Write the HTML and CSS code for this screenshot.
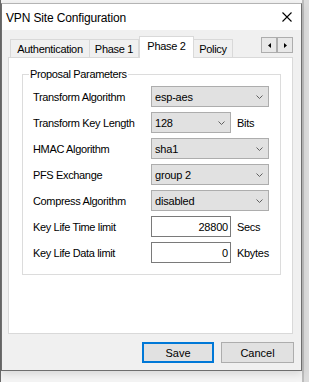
FILE: index.html
```html
<!DOCTYPE html>
<html>
<head>
<meta charset="utf-8">
<link rel="stylesheet" href="styles.css">
</head>
<body>
<div class="window">
  <div class="titlebar">
    <span class="title">VPN Site Configuration</span>
    <svg class="close" width="10" height="10" viewBox="0 0 10 10"><path d="M0.5 0.5L9.5 9.5M9.5 0.5L0.5 9.5" stroke="#000" stroke-width="1.1" fill="none"/></svg>
  </div>
  <div class="client">
    <div class="tabstrip">
      <div class="tab tab-auth">Authentication</div>
      <div class="tab tab-p1">Phase 1</div>
      <div class="tab tab-p2 active">Phase 2</div>
      <div class="tab tab-pol">Policy</div>
      <div class="scroller">
        <span class="sbtn"><svg width="3" height="5" viewBox="0 0 3 5"><path d="M3 0L0 2.5L3 5Z" fill="#000"/></svg></span>
        <span class="sbtn"><svg width="3" height="5" viewBox="0 0 3 5"><path d="M0 0L3 2.5L0 5Z" fill="#000"/></svg></span>
      </div>
    </div>
    <div class="panel">
      <fieldset class="group">
        <legend>Proposal Parameters</legend>
        <div class="grid">
          <div class="label">Transform Algorithm</div>
          <div class="ctl"><div class="select wide"><span>esp-aes</span><svg class="chev" width="7" height="4" viewBox="0 0 7 4"><path d="M0.5 0.5L3.5 3.5L6.5 0.5" stroke="#606060" fill="none"/></svg></div></div>

          <div class="label">Transform Key Length</div>
          <div class="ctl"><div class="select short"><span>128</span><svg class="chev" width="7" height="4" viewBox="0 0 7 4"><path d="M0.5 0.5L3.5 3.5L6.5 0.5" stroke="#606060" fill="none"/></svg></div><span class="unit">Bits</span></div>

          <div class="label">HMAC Algorithm</div>
          <div class="ctl"><div class="select wide"><span>sha1</span><svg class="chev" width="7" height="4" viewBox="0 0 7 4"><path d="M0.5 0.5L3.5 3.5L6.5 0.5" stroke="#606060" fill="none"/></svg></div></div>

          <div class="label">PFS Exchange</div>
          <div class="ctl"><div class="select wide"><span>group 2</span><svg class="chev" width="7" height="4" viewBox="0 0 7 4"><path d="M0.5 0.5L3.5 3.5L6.5 0.5" stroke="#606060" fill="none"/></svg></div></div>

          <div class="label">Compress Algorithm</div>
          <div class="ctl"><div class="select wide"><span>disabled</span><svg class="chev" width="7" height="4" viewBox="0 0 7 4"><path d="M0.5 0.5L3.5 3.5L6.5 0.5" stroke="#606060" fill="none"/></svg></div></div>

          <div class="label">Key Life Time limit</div>
          <div class="ctl"><div class="input">28800</div><span class="unit">Secs</span></div>

          <div class="label">Key Life Data limit</div>
          <div class="ctl"><div class="input">0</div><span class="unit">Kbytes</span></div>
        </div>
      </fieldset>
    </div>
    <div class="buttons">
      <div class="btn btn-default">Save</div>
      <div class="btn btn-cancel">Cancel</div>
    </div>
  </div>
</div>
</body>
</html>
```

FILE: styles.css
```css
html, body {
  margin: 0;
  padding: 0;
}
body {
  width: 309px;
  height: 382px;
  overflow: hidden;
  font-family: "Liberation Sans", Arial, sans-serif;
  font-size: 11px;
  color: #000;
  background:
    linear-gradient(90deg, #6a6a6a 0 1px, transparent 1px 302px, #bdbdbd 302px 304px, #dcdcdc 304px 309px),
    #f4f4f4;
}
.window {
  margin: 3px 0 0 1px;
  width: 301px;
  height: 368px;
  box-sizing: border-box;
  border: 1px solid #6e6e6e;
  border-top-color: #b4b4b4;
  background: #f0f0f0;
  display: flex;
  flex-direction: column;
  box-shadow: 0 3px 8px rgba(0, 0, 0, 0.12);
}
.titlebar {
  height: 26px;
  background: #fff;
  display: flex;
  align-items: center;
  padding: 0 9px 0 4px;
  flex: none;
}
.title {
  font-size: 12px;
  letter-spacing: -0.15px;
  padding-top: 1px;
}
.close {
  margin-left: auto;
  display: block;
}
.client {
  flex: 1;
  display: flex;
  flex-direction: column;
  padding: 6px 8px 7px 6px;
}
.tabstrip {
  height: 21px;
  display: flex;
  align-items: flex-end;
  padding-left: 2px;
  flex: none;
  letter-spacing: -0.3px;
}
.tab {
  height: 18px;
  box-sizing: border-box;
  border: 1px solid #d9d9d9;
  border-bottom: none;
  background: #f0f0f0;
  display: flex;
  align-items: center;
  justify-content: center;
  padding-top: 1px;
}
.tab-auth { width: 80px; }
.tab-p1 { width: 50px; margin-left: -1px; }
.tab-p2 { width: 55px; }
.tab-pol { width: 40px; margin-left: -1px; }
.tab.active {
  height: 22px;
  margin-bottom: -1px;
  background: #fff;
  position: relative;
  z-index: 1;
  align-items: flex-start;
  padding-top: 3px;
}
.scroller {
  margin-left: auto;
  align-self: flex-start;
  margin-top: 1px;
  display: flex;
}
.sbtn {
  width: 16px;
  height: 16px;
  box-sizing: border-box;
  border: 1px solid #adadad;
  background: #e8e8e8;
  display: flex;
  align-items: center;
  justify-content: center;
}
.sbtn svg { display: block; }
.panel {
  flex: 1;
  background: #fff;
  border: 1px solid #d9d9d9;
  display: flex;
  flex-direction: column;
}
.group {
  margin: 10px 11px 0 13px;
  padding: 5px 10px 11px 10px;
  border: 1px solid #dcdcdc;
  min-width: 0;
}
.group legend {
  padding: 0 1px;
  margin-left: -4px;
  line-height: 13px;
  letter-spacing: -0.35px;
}
.grid {
  display: grid;
  grid-template-columns: 118px auto;
  grid-auto-rows: 21px;
  row-gap: 5px;
}
.label {
  align-self: center;
  letter-spacing: -0.35px;
  white-space: nowrap;
}
.ctl {
  display: flex;
  align-items: center;
}
.select {
  height: 21px;
  box-sizing: border-box;
  border: 1px solid #adadad;
  background: #e1e1e1;
  display: flex;
  align-items: center;
  padding-left: 3px;
  letter-spacing: -0.2px;
}
.select.wide { width: 118px; }
.select.short { width: 80px; }
.chev {
  margin-left: auto;
  margin-right: 5px;
  display: block;
}
.input {
  width: 80px;
  height: 21px;
  box-sizing: border-box;
  border: 1px solid #7a7a7a;
  background: #fff;
  display: flex;
  align-items: center;
  justify-content: flex-end;
  padding-right: 2px;
  letter-spacing: -0.2px;
}
.unit {
  margin-left: 6px;
  letter-spacing: -0.3px;
}
.buttons {
  flex: none;
  display: flex;
  justify-content: flex-end;
  gap: 7px;
  margin-top: 8px;
  margin-right: -1px;
}
.btn {
  height: 21px;
  box-sizing: border-box;
  border: 1px solid #adadad;
  background: #e1e1e1;
  display: flex;
  align-items: center;
  justify-content: center;
}
.btn-default {
  width: 72px;
  border: 2px solid #0078d7;
}
.btn-cancel {
  width: 73px;
}
```
